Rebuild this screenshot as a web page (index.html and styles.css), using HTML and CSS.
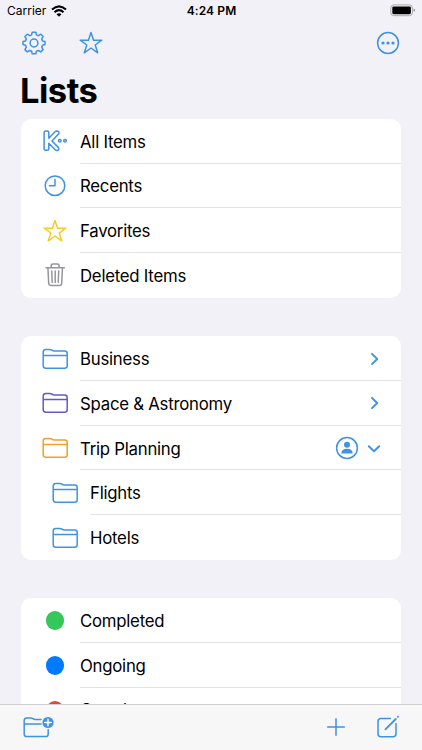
FILE: index.html
```html
<!DOCTYPE html>
<html lang="en">
<head>
    <meta charset="utf-8">
    <meta name="viewport" content="width=device-width, initial-scale=1">
    <title>Lists</title>
    <link rel="stylesheet" href="styles.css">
</head>
<body>
    <!-- Shared icon shapes -->
    <svg class="sprite">
        <symbol id="folder" viewBox="0 0 28 24">
            <path d="M2.2 18.5V5Q2.2 2.4 4.8 2.4H8.6Q10 2.4 11 3.2T13.2 4H23.8Q26.2 4 26.2 6.4V18.8Q26.2 21.2 23.8 21.2H4.8Q2.2 21.2 2.2 18.5ZM2.2 8.6H26.2"/>
        </symbol>
        <symbol id="star" viewBox="0 0 24 24">
            <path d="M12 1.4 14.6 9.2H22.8L16.2 14 18.7 21.8 12 17 5.3 21.8 7.8 14 1.2 9.2H9.4Z"/>
        </symbol>
    </svg>

    <div class="phone">
        <header class="status">
            <div class="carrier">
                <span>Carrier</span>
                <svg class="wifi" viewBox="0 0 16 12">
                    <path d="M1 4.6Q8 -1.9 15 4.6M3.5 7.2Q8 3.1 12.5 7.2"/>
                    <path class="fill" d="M5.5 9.2Q8 7.2 10.5 9.2L8 11.7Z"/>
                </svg>
            </div>
            <span class="time">4:24 PM</span>
            <svg class="battery" viewBox="0 0 26 13">
                <rect class="shell" x=".8" y=".9" width="21.6" height="10.8" rx="3"/>
                <rect x="2.3" y="2.4" width="18.6" height="7.8" rx="1.4"/>
                <path class="cap" d="M23.7 4.5Q25 5 25 6.3T23.7 8.1Z"/>
            </svg>
        </header>

        <nav class="top">
            <svg class="icon gear" viewBox="0 0 24 24">
                <path d="M10.2 1.2h3.6l.6 2.7 2 .8 2.4-1.5 2.3 2.3-1.4 2.4.8 2 2.5.5v3.2l-2.5.6-.8 2 1.4 2.4-2.4 2.3-2.3-1.4-2 .8-.6 2.5h-3.6l-.6-2.5-2-.8-2.3 1.4-2.4-2.3 1.4-2.4-.8-2-2.5-.6v-3.2l2.5-.5.8-2-1.4-2.4 2.3-2.3 2.4 1.5 2-.8Z"/>
                <circle cx="12" cy="12" r="3.9"/>
            </svg>
            <svg class="icon star-top"><use href="#star"/></svg>
            <svg class="icon more" viewBox="0 0 24 24">
                <circle cx="12" cy="12" r="10.4"/>
                <g class="solid"><circle cx="7" cy="12" r="1.6"/><circle cx="12" cy="12" r="1.6"/><circle cx="17" cy="12" r="1.6"/></g>
            </svg>
        </nav>

        <h1>Lists</h1>

        <main>
            <ul class="card">
                <li>
                    <span class="lead"><svg class="icon s24" viewBox="0 0 24 24">
                        <path d="M1.1 3.4Q1.1 1.9 2.6 1.9H4.3Q5.8 1.9 5.8 3.4V9.3L12 2.7Q12.8 1.9 14 1.9 16.1 2 16 3.8 15.9 4.6 15.2 5.3L9 12 15.3 18.4Q16.7 20.1 15 21.2 13.3 21.9 12.2 20.8L5.8 14.3V19.7Q5.8 21.2 4.3 21.2H2.6Q1.1 21.2 1.1 19.7Z"/>
                        <circle cx="16.8" cy="11.7" r="1.3"/><circle cx="22" cy="11.7" r="1.3"/>
                    </svg></span>
                    <span class="label">All Items</span>
                </li>
                <li>
                    <span class="lead"><svg class="icon s24" viewBox="0 0 24 24"><circle cx="12" cy="11.7" r="9.8"/><path d="M12 5.4V11.8H6.4"/></svg></span>
                    <span class="label">Recents</span>
                </li>
                <li>
                    <span class="lead"><svg class="icon s24 yellow"><use href="#star"/></svg></span>
                    <span class="label">Favorites</span>
                </li>
                <li>
                    <span class="lead"><svg class="icon s24 gray" viewBox="0 0 24 24">
                        <path d="M3 4.8H21.4M8.2 4.6V2.8Q8.2.9 10.1.9H14.2Q16.1.9 16.1 2.8V4.6M4.9 4.8 5.7 20.3Q5.9 22.6 8 22.6H16.4Q18.5 22.6 18.7 20.3L19.5 4.8M8.7 8 9.2 19.4M12.2 8V19.4M15.7 8 15.2 19.4"/>
                    </svg></span>
                    <span class="label">Deleted Items</span>
                </li>
            </ul>

            <ul class="card">
                <li>
                    <span class="lead"><svg class="icon folder"><use href="#folder"/></svg></span>
                    <span class="label">Business</span>
                    <svg class="icon chevron" viewBox="0 0 14 14"><path d="M5 1.8 10.2 7 5 12.2"/></svg>
                </li>
                <li>
                    <span class="lead"><svg class="icon folder purple"><use href="#folder"/></svg></span>
                    <span class="label">Space &amp; Astronomy</span>
                    <svg class="icon chevron" viewBox="0 0 14 14"><path d="M5 1.8 10.2 7 5 12.2"/></svg>
                </li>
                <li>
                    <span class="lead"><svg class="icon folder orange"><use href="#folder"/></svg></span>
                    <span class="label">Trip Planning</span>
                    <svg class="icon person" viewBox="0 0 24 24">
                        <circle cx="12" cy="12" r="10.4"/>
                        <g class="solid"><circle cx="12" cy="8.7" r="3"/><path d="M6.3 17.5Q6.4 12.8 12 12.8T17.7 17.5Z"/></g>
                    </svg>
                    <svg class="icon chevron" viewBox="0 0 14 14"><path d="M1.8 5.2 7 10.2 12.2 5.2"/></svg>
                </li>
                <li class="nested">
                    <span class="lead"><svg class="icon folder"><use href="#folder"/></svg></span>
                    <span class="label">Flights</span>
                </li>
                <li class="nested">
                    <span class="lead"><svg class="icon folder"><use href="#folder"/></svg></span>
                    <span class="label">Hotels</span>
                </li>
            </ul>

            <ul class="card">
                <li><span class="lead"><i class="dot green"></i></span><span class="label">Completed</span></li>
                <li><span class="lead"><i class="dot blue"></i></span><span class="label">Ongoing</span></li>
                <li class="partial"><span class="lead"><i class="dot red"></i></span><span class="label">Overdue</span></li>
            </ul>
        </main>

        <footer class="toolbar">
            <svg class="icon new-folder" viewBox="0 0 32 26">
                <path d="M19 5.5H13.2Q12 5.5 11 4.7T8.8 3.9H4.8Q2.2 3.9 2.2 6.5V19.9Q2.2 22.5 4.8 22.5H23.8Q26.2 22.5 26.2 19.9V15.5M2.2 10H19"/>
                <circle class="badge" cx="26" cy="8.5" r="5.6"/>
                <path class="plus-mark" d="M26 5.2V11.8M22.7 8.5H29.3"/>
            </svg>
            <svg class="icon plus" viewBox="0 0 20 20"><path d="M10 1.7V18.3M1.7 10H18.3"/></svg>
            <svg class="icon compose" viewBox="0 0 24 24">
                <path d="M14.4 3.6H5Q2 3.6 2 6.6V18.7Q2 21.7 5 21.7H17Q20 21.7 20 18.7V8.6"/>
                <path class="pencil" d="M9.4 14.4 19.8 4M21.9 1.9 22.1 1.7"/>
            </svg>
        </footer>
    </div>
</body>
</html>
```

FILE: styles.css
```css
* {
    box-sizing: border-box;
}
body {
    margin: 0;
    background: #f2f1f8;
    font-family: Inter, 'Liberation Sans', sans-serif;
    color: #000;
}
.sprite {
    display: none;
}
.phone {
    display: flex;
    flex-direction: column;
    height: 750px;
    overflow: hidden;
}
.icon {
    flex: none;
    fill: none;
    stroke: #3f93e2;
    stroke-width: 1.5;
    stroke-linejoin: round;
    stroke-linecap: round;
}
.solid {
    fill: #3f93e2;
    stroke: none;
}

/* Status bar */
.status {
    flex: none;
    display: grid;
    grid-template-columns: 1fr auto 1fr;
    align-items: center;
    height: 21px;
    padding: 0 6px 0 7px;
    font-size: 12px;
}
.carrier {
    display: flex;
    align-items: center;
    gap: 5px;
}
.wifi {
    width: 16px;
    height: 12px;
    fill: none;
    stroke: #000;
    stroke-width: 2;
}
.wifi .fill {
    fill: #000;
    stroke: none;
}
.time {
    font-weight: 600;
    font-size: 12px;
    letter-spacing: 0.1px;
}
.battery {
    justify-self: end;
    width: 26px;
    height: 13px;
}
.battery .shell {
    fill: none;
    stroke: #aaa9af;
    stroke-width: 1;
}
.battery .cap {
    fill: #8a898f;
}

/* Navigation */
.top {
    flex: none;
    display: flex;
    align-items: center;
    height: 44px;
    padding: 0 22px;
}
.gear,
.star-top,
.more,
.s24 {
    width: 24px;
    height: 24px;
}
.star-top {
    margin-left: 33px;
}
.more {
    margin-left: auto;
}
h1 {
    flex: none;
    height: 53.8px;
    margin: 0;
    padding-left: 20px;
    font-size: 34.5px;
    line-height: 51px;
    font-weight: 700;
    letter-spacing: -0.5px;
}

/* Grouped lists */
main {
    flex: 1;
    min-height: 0;
    overflow: hidden;
    padding: 0 21px;
}
.card {
    margin: 0 0 38.4px;
    padding: 0;
    list-style: none;
    background: #fff;
    border-radius: 10px;
    overflow: hidden;
}
.card li {
    display: flex;
    height: 44.75px;
    align-items: center;
    padding-right: 20px;
    background: linear-gradient(#e3e3e6, #e3e3e6) 59px 100% / 100% 1px no-repeat;
}
.card li.nested {
    padding-left: 10px;
    background-position-x: 69px;
}
.card li:last-child {
    background: none;
}
.lead {
    flex: none;
    display: flex;
    justify-content: center;
    width: 26px;
    margin: 0 12px 0 21px;
}
.label {
    flex: 1;
    padding-top: 1px;
    font-size: 16.8px;
    letter-spacing: -0.25px;
}
.partial .label {
    padding: 0 0 1px;
}
.folder {
    width: 28px;
    height: 24px;
}
.chevron {
    width: 14px;
    height: 14px;
    stroke-width: 1.9;
}
.person {
    width: 24px;
    height: 24px;
    margin-right: 8px;
}
.yellow {
    stroke: #f8ca24;
}
.gray {
    stroke: #96969a;
}
.purple {
    stroke: #6459c4;
}
.orange {
    stroke: #f0a02e;
}
.dot {
    width: 18.5px;
    height: 18.5px;
    border-radius: 50%;
}
.green {
    background: #34c759;
}
.blue {
    background: #007aff;
}
.red {
    background: #eb4136;
}

/* Bottom toolbar */
.toolbar {
    flex: none;
    display: flex;
    align-items: center;
    height: 46px;
    padding: 0 22px 2px;
    border-top: 1px solid #d0d0d3;
    background: #f7f7f8;
}
.new-folder {
    width: 32px;
    height: 26px;
}
.badge {
    fill: #3f93e2;
    stroke: none;
}
.plus-mark {
    stroke: #fff;
}
.plus {
    width: 20px;
    height: 20px;
    margin: 0 30px 0 auto;
}
.compose {
    width: 24px;
    height: 24px;
}
.pencil {
    stroke-width: 1.8;
}
```
